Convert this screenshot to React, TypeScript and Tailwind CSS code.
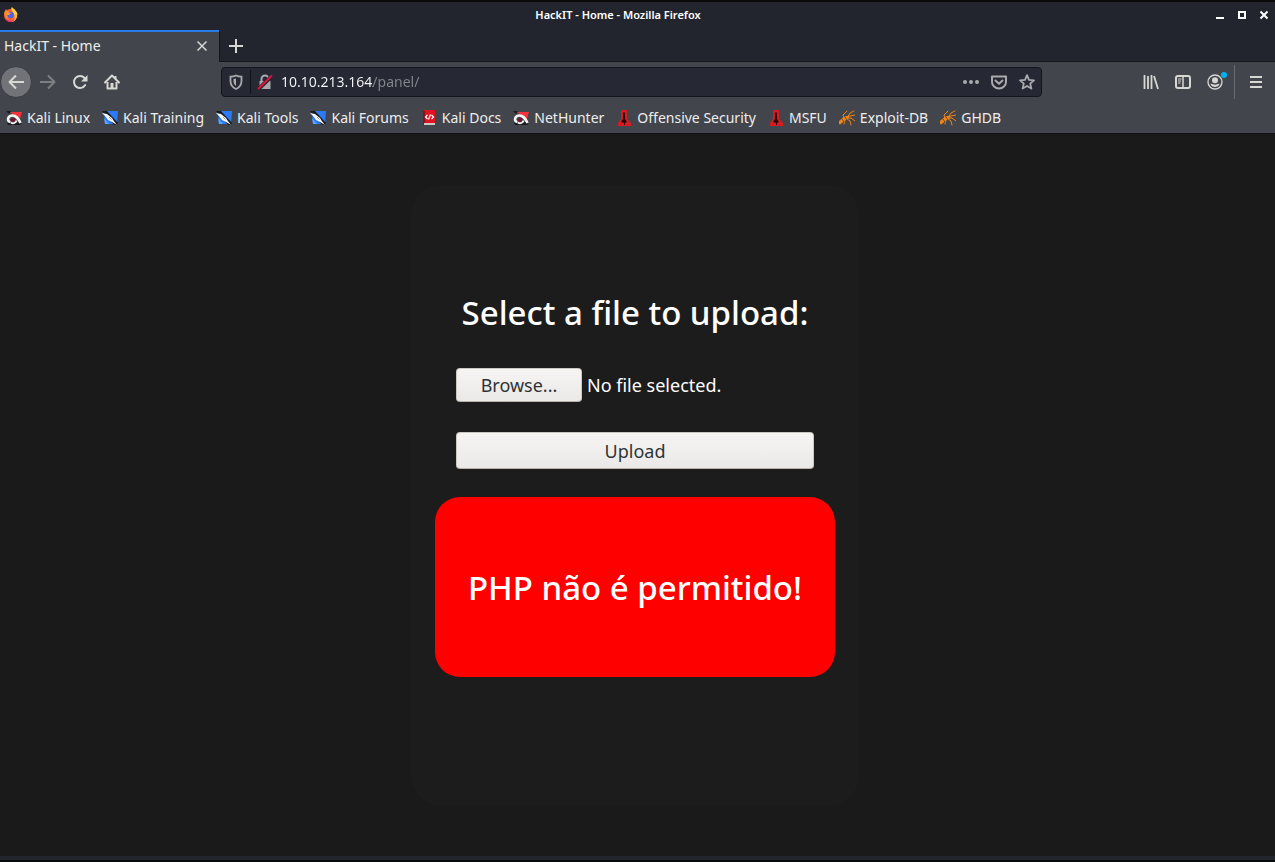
import { useRef } from 'react'
import type { ReactNode } from 'react'

type BookmarkIcon = 'dragon' | 'knife' | 'book' | 'tower' | 'bug'

const bookmarks: { label: string; icon: BookmarkIcon }[] = [
  { label: 'Kali Linux', icon: 'dragon' },
  { label: 'Kali Training', icon: 'knife' },
  { label: 'Kali Tools', icon: 'knife' },
  { label: 'Kali Forums', icon: 'knife' },
  { label: 'Kali Docs', icon: 'book' },
  { label: 'NetHunter', icon: 'dragon' },
  { label: 'Offensive Security', icon: 'tower' },
  { label: 'MSFU', icon: 'tower' },
  { label: 'Exploit-DB', icon: 'bug' },
  { label: 'GHDB', icon: 'bug' },
]

const bookmarkIcons: Record<BookmarkIcon, ReactNode> = {
  dragon: (
    <>
      <path d="M4 2h12l-3 10-4-6z" fill="#f5323c" />
      <path d="M0 1h5L3 4zM1 13l1 2h11l3-1-3-2z" fill="#1b1c20" />
      <path d="M4.500 12C1 12 1 6 6 5.500c4-.3 6 2.500 8.500 7.500" stroke="#f4f4f4" strokeWidth="2.600" fill="none" />
      <path d="M4.500 10.500c0-3 4-3.500 5-.5l-2 2.500z" fill="#7b1130" />
      <path d="M5 12.500c2 1.500 5 .5 5.500-2" stroke="#f4f4f4" strokeWidth="1.800" fill="none" />
    </>
  ),
  knife: (
    <>
      <path d="M2 1h14l-1 13H3z" fill="#2b7bf6" />
      <path d="M2 8l5 6H3z" fill="#55a8ff" />
      <path d="M0 1h5l11 12-1 2h-3z" fill="#17191d" />
      <path d="M0 3l5 1 5 4 1.500 2.500L15 15l-5-3-4-2-3-4z" fill="#f6f6f6" />
      <path d="M7 7l2.500 2.500" stroke="#9aa1ab" />
    </>
  ),
  book: (
    <>
      <path d="M3 0h11v13H3z" fill="#df1420" />
      <path d="M2 1h2v14H2z" fill="#8e1019" />
      <path d="M3 13h11v2H3z" fill="#c9c9cc" />
      <path d="M6.500 5L4.500 7l2 2M10.500 5l2 2-2 2M9.500 4.500l-2 5" stroke="#fff" strokeWidth="1.200" fill="none" />
    </>
  ),
  tower: (
    <>
      <path d="M5 0h6v9l4 4v3H2v-3l3-4z" fill="#d81b22" />
      <path d="M8 2l1 1v6l2 3-2 1v2H8v-2l-3-1 2-3V3z" fill="#250709" />
    </>
  ),
  bug: (
    <g fill="none" stroke="#ef8516" strokeLinecap="round">
      <path d="M1 12.500l4-3.500 3-1.500" strokeWidth="3.500" />
      <path d="M8 8l3-5 4-2M8 7l3-1 5-1M8 8l4 0 4 3M8 9l3 2 1 4M5 8l-1-3 4-4M6 10l-1 4" strokeWidth="1" />
      <path d="M3 9l2 3M6 7l2 3" stroke="#6a4a20" strokeWidth="1" />
    </g>
  ),
}

function Icon({ children, className = 'size-4' }: { children: ReactNode; className?: string }) {
  return (
    <svg viewBox="0 0 16 16" className={`${className} shrink-0`} fill="none" aria-hidden="true">
      {children}
    </svg>
  )
}

function ToolButton({ label, className = '', children }: { label: string; className?: string; children: ReactNode }) {
  return (
    <button
      type="button"
      aria-label={label}
      className={`flex size-8 shrink-0 items-center justify-center text-[#d7d7d3] ${className}`}
    >
      {children}
    </button>
  )
}

function TitleBar() {
  return (
    <div className="grid h-7 grid-cols-[1fr_auto_1fr] items-center pb-0.5 pl-[3px] pr-1.5">
      <svg viewBox="0 0 16 16" className="size-4" aria-hidden="true">
        <circle cx="7.500" cy="8.500" r="6.500" fill="#ff5b36" />
        <path d="M8 1c3 1 7 4 6 9-1 3-3 5-6 5 4-2 4-5 3-8z" fill="#ffbd2e" />
        <path d="M8.500 0c3 2 6 5 6 8l-3-1-3-4z" fill="#ffd23e" />
        <path d="M1 6l2-4 1 2 3 1-2 2 1 5-3-1z" fill="#ff8a25" />
        <circle cx="7.500" cy="8" r="3.200" fill="#4b62e8" />
        <path d="M4 5l4 1-2 2-2 0z" fill="#ff9b29" />
        <path d="M2 11c2 3 7 4 10 1-2 4-8 4-10-1z" fill="#f0267a" />
      </svg>
      <span className="mr-9 text-[11px] font-semibold text-white">HackIT - Home - Mozilla Firefox</span>
      <div className="flex justify-end gap-3 text-white">
        <button type="button" aria-label="Minimize">
          <svg viewBox="0 0 10 10" className="size-[10px]" aria-hidden="true">
            <path d="M1 7h8v2H1z" fill="currentColor" />
          </svg>
        </button>
        <button type="button" aria-label="Maximize">
          <svg viewBox="0 0 10 10" className="size-[10px]" aria-hidden="true">
            <path d="M2 2h6v6H2z" fill="none" stroke="currentColor" strokeWidth="2" />
          </svg>
        </button>
        <button type="button" aria-label="Close window">
          <svg viewBox="0 0 10 10" className="size-[10px]" aria-hidden="true">
            <path d="M1.500 1.500l7 7M8.500 1.500l-7 7" stroke="currentColor" strokeWidth="2" />
          </svg>
        </button>
      </div>
    </div>
  )
}

function TabStrip() {
  return (
    <div className="flex h-8">
      <div className="flex w-[219px] items-center justify-between border-t-2 border-[#2a7de9] bg-[#42454c] pb-0.5 pl-1 pr-[11px]">
        <span className="text-sm text-[#eeeeec]">HackIT - Home</span>
        <button type="button" aria-label="Close tab" className="text-[#d7d7d3]">
          <Icon className="size-3">
            <path d="M2 2l12 12M14 2L2 14" stroke="currentColor" strokeWidth="2" />
          </Icon>
        </button>
      </div>
      <div className="flex flex-1 border-b border-l border-[#14161b]">
        <ToolButton label="New tab">
          <Icon>
            <path d="M8 1v14M1 8h14" stroke="currentColor" strokeWidth="2" />
          </Icon>
        </ToolButton>
      </div>
    </div>
  )
}

function AddressBar() {
  return (
    <div className="flex h-[30px] flex-1 items-center rounded border border-[#15161b] bg-[#262833] text-[#aaaaae]">
      <button type="button" aria-label="Tracking protection" className="px-[6px]">
        <Icon>
          <path d="M8 1.500c2 1 4 1.200 5.500 1.200V7c0 4-2 6.500-5.500 8C4.500 13.500 2.500 11 2.500 7V2.700C4 2.700 6 2.500 8 1.500z" stroke="currentColor" strokeWidth="1.800" />
          <path d="M8 4.500v7.500C6.200 10.800 5.500 9 5.500 7V5z" fill="currentColor" />
        </Icon>
      </button>
      <span className="h-6 w-px bg-[#111217]" />
      <button type="button" aria-label="Connection not secure" className="px-[6px]">
        <Icon>
          <path d="M4.500 8V5a3.500 3.500 0 0 1 7 0v3" stroke="currentColor" strokeWidth="2" />
          <path d="M2.500 7h11v8h-11z" fill="currentColor" />
          <path d="M1 15.500L15 2" stroke="#262833" strokeWidth="4" />
          <path d="M1 15L15 1.500" stroke="#e8113f" strokeWidth="1.800" />
        </Icon>
      </button>
      {/* host part is bright, the path after it is dimmed */}
      <input
        type="text"
        aria-label="Address"
        defaultValue="10.10.213.164/panel/"
        className="ml-0.5 min-w-0 flex-1 bg-[linear-gradient(90deg,#f9f9fa_92px,#85868d_92px)] bg-clip-text text-sm text-transparent caret-white outline-none"
      />
      <div className="flex gap-3 pr-[6px]">
        <button type="button" aria-label="Page actions">
          <Icon>
            <g fill="currentColor">
              <circle cx="2" cy="8" r="2" />
              <circle cx="8" cy="8" r="2" />
              <circle cx="14" cy="8" r="2" />
            </g>
          </Icon>
        </button>
        <button type="button" aria-label="Save to Pocket">
          <Icon>
            <path d="M1 2.500h14V8a7 6.500 0 0 1-14 0z" stroke="currentColor" strokeWidth="2" strokeLinejoin="round" />
            <path d="M4.500 6.500L8 9.800l3.500-3.300" stroke="currentColor" strokeWidth="2" strokeLinecap="round" strokeLinejoin="round" />
          </Icon>
        </button>
        <button type="button" aria-label="Bookmark this page">
          <Icon>
            <path d="M8 1.200l2 4.600 5 .5-3.800 3.300 1.200 5L8 12l-4.400 2.600 1.200-5L1 6.300l5-.5z" stroke="currentColor" strokeWidth="1.800" strokeLinejoin="round" />
          </Icon>
        </button>
      </div>
    </div>
  )
}

function NavBar() {
  return (
    <nav className="flex h-10 items-center">
      <ToolButton label="Back" className="rounded-full border border-[#393b41] bg-[#727378]">
        <Icon>
          <path d="M8 1.500L1.500 8 8 14.500M2 8h14" stroke="currentColor" strokeWidth="2" strokeLinejoin="round" />
        </Icon>
      </ToolButton>
      <ToolButton label="Forward" className="opacity-40">
        <Icon>
          <path d="M8 1.500L14.500 8 8 14.500M14 8H0" stroke="currentColor" strokeWidth="2" strokeLinejoin="round" />
        </Icon>
      </ToolButton>
      <ToolButton label="Reload">
        <Icon>
          <path d="M13.200 11A6 6 0 1 1 12.500 4" stroke="currentColor" strokeWidth="2" strokeLinecap="round" />
          <path d="M15.500 1v6.500H9z" fill="currentColor" />
        </Icon>
      </ToolButton>
      <ToolButton label="Home">
        <Icon>
          <path d="M1 8.500L8 1.500l7 7" stroke="currentColor" strokeWidth="2" strokeLinecap="round" strokeLinejoin="round" />
          <path d="M3.500 8v6.500h9V8M11.500 2v3" stroke="currentColor" strokeWidth="2" strokeLinejoin="round" />
          <path d="M6.500 9h3v5h-3z" fill="currentColor" />
        </Icon>
      </ToolButton>
      <div className="ml-[93px] mr-[92px] flex flex-1">
        <AddressBar />
      </div>
      <ToolButton label="Library" className="ml-px">
        <Icon>
          <path d="M1.500 1v14M5 2v13M8.500 1v14M11 2l4 13" stroke="currentColor" strokeWidth="1.800" />
        </Icon>
      </ToolButton>
      <ToolButton label="Sidebars">
        <Icon>
          <rect x="1" y="2" width="14" height="12" rx="2" stroke="currentColor" strokeWidth="2" />
          <path d="M8 2v12" stroke="currentColor" strokeWidth="1.500" />
          <path d="M3 5h3.500M3 7h3M3 9h2.500" stroke="currentColor" strokeWidth="1" />
        </Icon>
      </ToolButton>
      <ToolButton label="Account" className="relative">
        <Icon>
          <circle cx="8" cy="8" r="7" stroke="currentColor" strokeWidth="1.300" />
          <circle cx="8" cy="6.200" r="3" fill="currentColor" />
          <path d="M3.500 10c1.500-.6 2.500.8 4.500.8s3-1.400 4.500-.8c-.6 2-2.500 3-4.500 3s-3.900-1-4.500-3z" fill="currentColor" />
        </Icon>
        <span className="absolute right-1 top-1.5 size-1.5 rounded-full bg-[#00b3f4]" />
      </ToolButton>
      <span className="ml-[3px] h-[34px] w-px bg-[#6b6d73]" />
      <ToolButton label="Open menu" className="ml-[5px] mr-[3px]">
        <Icon>
          <path d="M2 3h12M2 8h12M2 13h12" stroke="currentColor" strokeWidth="2" />
        </Icon>
      </ToolButton>
    </nav>
  )
}

function BookmarksBar() {
  return (
    <ul className="flex h-8 items-center gap-3 overflow-hidden border-b border-[#111217] pl-1.5">
      {bookmarks.map(({ label, icon }) => (
        <li key={label}>
          <a href="#" className="flex items-center gap-[5px] whitespace-nowrap text-sm text-[#eeeeec]">
            <Icon>{bookmarkIcons[icon]}</Icon>
            {label}
          </a>
        </li>
      ))}
    </ul>
  )
}

const buttonStyle =
  'rounded border border-[#cdc7c2] border-b-[#b8b2ab] bg-linear-to-b from-[#f6f5f4] to-[#ebe9e8] text-lg leading-6 text-[#2e3436]'

function UploadPanel() {
  const fileRef = useRef<HTMLInputElement>(null)

  return (
    <section className="flex min-h-[621px] w-[448px] flex-col items-center rounded-[30px] bg-[#1c1c1c] px-6 pt-[101px] text-white">
      <form className="flex w-[358px] flex-col" onSubmit={(e) => e.preventDefault()}>
        <label htmlFor="file" className="whitespace-nowrap text-center text-[33px] font-medium leading-[54px]">
          Select a file to upload:
        </label>
        <div className="mt-7 flex items-center gap-[5px]">
          <input ref={fileRef} id="file" type="file" className="sr-only" />
          <button type="button" className={`${buttonStyle} h-[34px] w-[126px]`} onClick={() => fileRef.current?.click()}>
            Browse...
          </button>
          <span className="text-lg leading-6">No file selected.</span>
        </div>
        <button type="submit" className={`${buttonStyle} mt-[30px] h-[37px] w-full`}>
          Upload
        </button>
      </form>
      <div role="alert" className="mt-7 flex h-[180px] w-[400px] items-center justify-center rounded-[25px] bg-[#ff0000] pt-0.5">
        <p className="whitespace-nowrap text-[33px] font-medium leading-[54px]">PHP não é permitido!</p>
      </div>
    </section>
  )
}

export default function App() {
  return (
    <div className="flex min-h-screen flex-col border-y-2 border-[#0b0a0b] bg-[#23252e] font-['Noto_Sans','Open_Sans',sans-serif]">
      <header>
        <TitleBar />
        <TabStrip />
        <div className="bg-[#42454c]">
          <NavBar />
          <BookmarksBar />
        </div>
      </header>
      <main className="mb-1 flex flex-1 justify-center bg-[#1a1a1a] pb-[50px] pr-[5px] pt-[51px]">
        <UploadPanel />
      </main>
    </div>
  )
}
